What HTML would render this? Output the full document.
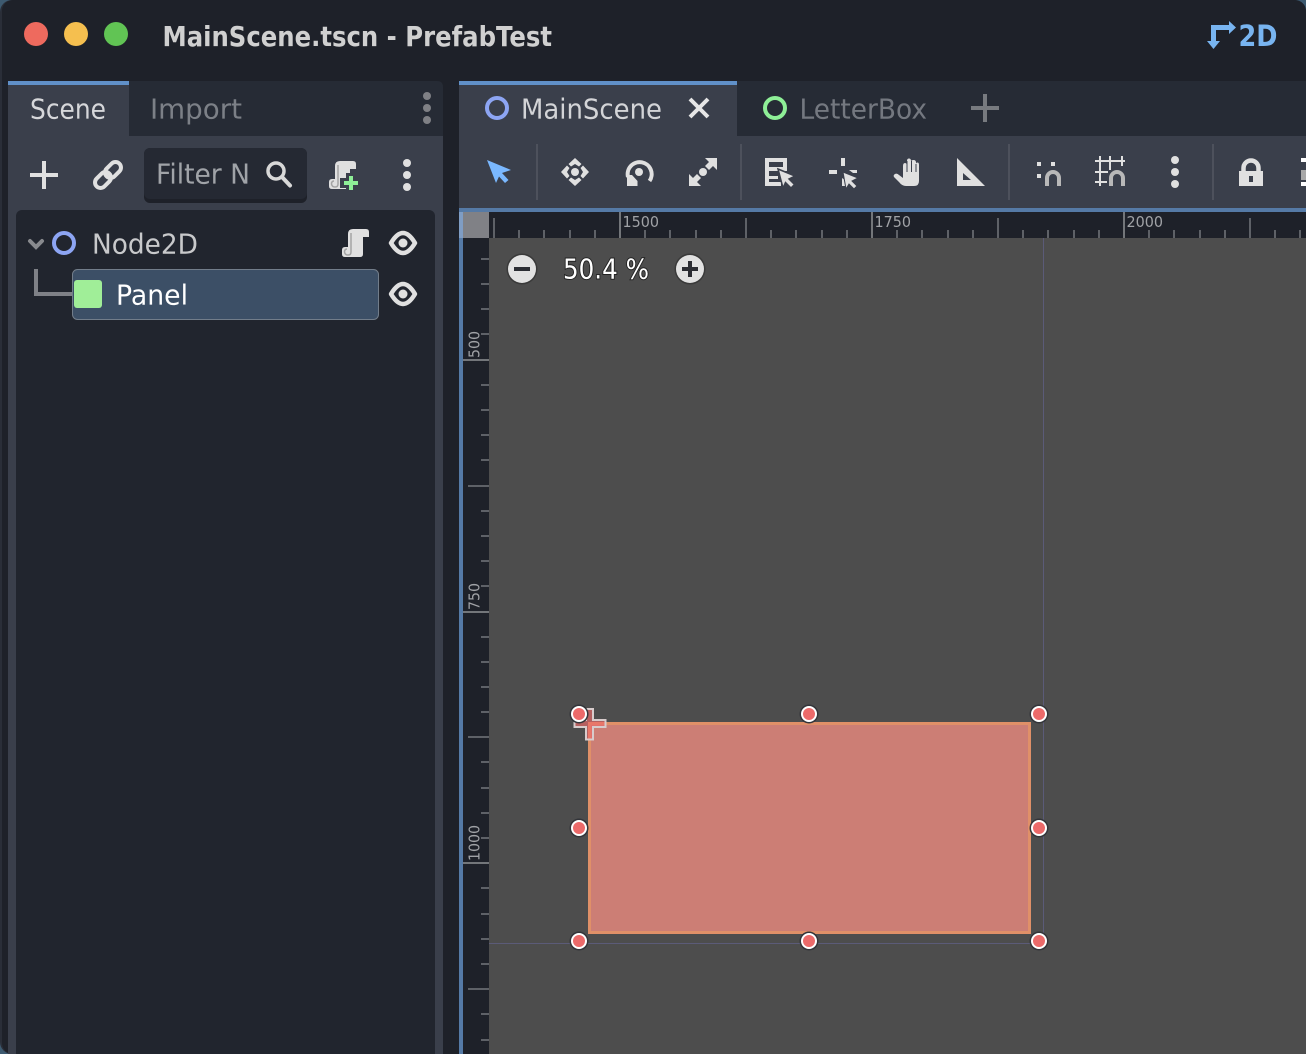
<!DOCTYPE html>
<html>
<head>
<meta charset="utf-8">
<style>
html,body{margin:0;padding:0;background:#1e2129;width:1306px;height:1054px;overflow:hidden}
svg{display:block}
text{font-family:"DejaVu Sans","Liberation Sans",sans-serif}
</style>
</head>
<body>
<svg width="1306" height="1054" viewBox="0 0 1306 1054" xmlns="http://www.w3.org/2000/svg">
<defs>
<g id="scroll">
<path d="M353 229H366Q369 229 369 232V237H363V254Q363 257 360 257H345Q342 257 342 254V250Q342 247 345 247H348V234Q348 229 353 229Z" fill="#e0e0e0"/>
<path d="M351 233V252Q351 255 348 255Q345 255 344.500 252Q344.500 249 347 249" fill="none" stroke="#a4a4a4" stroke-width="1.500"/>
</g>
<g id="eye"><path d="M-12 0Q0 -20 12 0Q0 20 -12 0Z" fill="none" stroke="#e0e0e0" stroke-width="4.500" stroke-linejoin="round"/><circle r="4.500" fill="#e0e0e0"/></g>
<g id="handle"><circle r="9.500" fill="#33353a"/><circle r="8" fill="#fff"/><circle r="6" fill="#ec6a6a"/></g>
</defs>

<!-- window -->
<rect width="1306" height="1054" fill="#3d5a70"/>
<rect x="0" y="0" width="1306" height="1054" rx="12" ry="12" fill="#2a2e38"/>
<rect x="2" y="0" width="1304" height="1054" rx="11" fill="#1e2129"/>

<!-- traffic lights -->
<circle cx="36" cy="34" r="12" fill="#ee6a5e"/>
<circle cx="76" cy="34" r="12" fill="#f5bf4f"/>
<circle cx="116" cy="34" r="12" fill="#61c454"/>

<text x="162.500" y="46" font-size="28" font-weight="700" fill="#d0d0d0" textLength="389.500" lengthAdjust="spacingAndGlyphs">MainScene.tscn - PrefabTest</text>

<!-- 2D -->
<g fill="#78b4f0">
<path d="M1211 25H1229V21L1236 27.500L1229 34V30H1216V41H1220L1213.500 49L1207 41H1211Z"/>
<text x="1238.500" y="46" font-size="29" font-weight="700" textLength="39" lengthAdjust="spacingAndGlyphs">2D</text>
</g>

<!-- left panel -->
<path d="M8 81H437Q443 81 443 87V1054H8Z" fill="#262b35"/>
<rect x="8" y="136" width="435" height="918" fill="#3a3f4b"/>
<rect x="8" y="81" width="121" height="55" fill="#3a3f4b"/>
<rect x="8" y="81" width="121" height="4" fill="#6090c8"/>
<text x="30" y="118.500" font-size="28" fill="#d6d7da" textLength="76" lengthAdjust="spacingAndGlyphs">Scene</text>
<text x="150" y="118.500" font-size="28" fill="#7c8087" textLength="92" lengthAdjust="spacingAndGlyphs">Import</text>
<g fill="#7f8085"><circle cx="427" cy="96" r="4"/><circle cx="427" cy="108" r="4"/><circle cx="427" cy="120" r="4"/></g>

<!-- scene toolbar -->
<path d="M30 173H42V161H46V173H58V177H46V189H42V177H30Z" fill="#e0e0e0"/>
<g fill="none" stroke="#e0e0e0" stroke-width="4">
<rect x="-5.500" y="-9" width="11" height="18" rx="5.500" transform="translate(113 170) rotate(45)"/>
<rect x="-5.500" y="-9" width="11" height="18" rx="5.500" transform="translate(103 180) rotate(45)"/>
</g>
<rect x="144" y="148" width="163" height="55" rx="6" fill="#1e2129"/>
<rect x="144" y="148" width="163" height="51" rx="6" fill="#252933"/>
<text x="156" y="183.500" font-size="28" fill="#a0a3a8" textLength="94" lengthAdjust="spacingAndGlyphs">Filter N</text>
<circle cx="276" cy="171" r="8" fill="none" stroke="#d8d8d8" stroke-width="3.500"/>
<path d="M282 177L290 185.500" stroke="#d8d8d8" stroke-width="4" stroke-linecap="round"/>
<use href="#scroll" x="-13" y="-68"/>
<path d="M346 173H356V178H362V188H356V193H346V188H340V178H346Z" fill="#3a3f4b"/>
<path d="M349 176H353V181H358V185H353V190H349V185H344V181H349Z" fill="#8eef97"/>
<g fill="#e0e0e0"><circle cx="407" cy="163" r="4"/><circle cx="407" cy="175" r="4"/><circle cx="407" cy="187" r="4"/></g>

<!-- tree -->
<rect x="16" y="210" width="419" height="860" rx="6" fill="#21252e"/>
<path d="M30 241L36 247L42 241" fill="none" stroke="#888a8e" stroke-width="4" stroke-linecap="round"/>
<circle cx="64" cy="243" r="10" fill="none" stroke="#8da5f3" stroke-width="4"/>
<text x="92" y="253.500" font-size="28" fill="#c8c9cb" textLength="106" lengthAdjust="spacingAndGlyphs">Node2D</text>
<use href="#scroll"/>
<use href="#eye" x="403" y="243"/>
<path d="M36 269V294H72" fill="none" stroke="#7f8187" stroke-width="4"/>
<rect x="72.500" y="269.500" width="306" height="50" rx="5" fill="#3c4f66" stroke="#727d8a"/>
<rect x="74" y="280" width="28" height="28" rx="3" fill="#a0ee98"/>
<text x="116" y="304.500" font-size="28" fill="#ffffff" textLength="72" lengthAdjust="spacingAndGlyphs">Panel</text>
<use href="#eye" x="403" y="294"/>

<!-- right panel tabs -->
<rect x="459" y="81" width="847" height="55" fill="#262b35"/>
<rect x="459" y="81" width="278" height="55" fill="#3a3f4b"/>
<rect x="459" y="81" width="278" height="4" fill="#6090c8"/>
<circle cx="497" cy="108" r="10" fill="none" stroke="#8da5f3" stroke-width="4"/>
<text x="521" y="118.500" font-size="28" fill="#d3d4d7" textLength="141" lengthAdjust="spacingAndGlyphs">MainScene</text>
<path d="M690 99L708 117M708 99L690 117" stroke="#e6e6e6" stroke-width="4"/>
<circle cx="775" cy="108" r="10" fill="none" stroke="#8eef97" stroke-width="4"/>
<text x="799.500" y="118.500" font-size="28" fill="#747880" textLength="127.500" lengthAdjust="spacingAndGlyphs">LetterBox</text>
<path d="M971 106H983V94H987V106H999V110H987V122H983V110H971Z" fill="#777a7f"/>

<!-- editor toolbar -->
<rect x="459" y="136" width="847" height="72" fill="#3a3f4b"/>
<g fill="#4d515c">
<rect x="536" y="144" width="2" height="56"/>
<rect x="740" y="144" width="2" height="56"/>
<rect x="1008" y="144" width="2" height="56"/>
<rect x="1212" y="144" width="2" height="56"/>
</g>
<polygon points="487,160 511,170 502,173 508.500,180 505,183 499,176.500 496,183" fill="#7ab8ff"/>
<g fill="#e0e0e0">
<!-- move -->
<circle cx="575" cy="172" r="4"/>
<path d="M575 158L581.500 164L579 166.500L575 164L571 166.500L568.500 164Z"/>
<path d="M575 186L581.500 180L579 177.500L575 180L571 177.500L568.500 180Z"/>
<path d="M561 172L567 165.500L569.500 168L567 172L569.500 176L567 178.500Z"/>
<path d="M589 172L583 165.500L580.500 168L583 172L580.500 176L583 178.500Z"/>
<!-- rotate -->
<circle cx="639" cy="172" r="4"/>
<path d="M628 177A12 12 0 1 1 649.500 181" fill="none" stroke="#e0e0e0" stroke-width="4"/>
<polygon points="627,175 627,186 637.500,186 637.500,181 632,175"/>
<!-- scale -->
<circle cx="703" cy="172" r="4"/>
<polygon points="705,158 717,158 717,170 713,166 709,170 705,166 709,162"/>
<polygon points="701,186 689,186 689,174 693,178 697,174 701,178 697,182"/>
<!-- list select -->
<path d="M765 158H787V171H769V176H778V179H769V182H781V186H765ZM769 162V167H783V162Z" fill-rule="evenodd"/>
<polygon points="778,169 795,176 789,179 794.500,184.500 791,188 785.500,182.500 783,188" stroke="#3a3f4b" stroke-width="1.500"/>
<!-- smart select -->
<rect x="829" y="170" width="8" height="4"/>
<rect x="841" y="158" width="4" height="8"/>
<polygon points="849,170 857,170 857,173 853,173"/>
<polygon points="842,178 845,180 845,186 842,186"/>
<polygon points="843,172 858,178 852,181 857,186 854,189 849,184 846,189" stroke="#3a3f4b" stroke-width="1"/>
<!-- hand -->
<path d="M903 166Q903 163 905 163Q907 163 907 166V161Q907 158.500 909 158.500Q911 158.500 911 161V162Q911 160 913.500 160Q916 160 916 162.500V164Q916 162.500 917.500 162.500Q919 162.500 919 165V181Q919 186 914 186H906Q902 186 899 182L894 177Q893 175 895 174Q897 173 899 175L903 178Z"/>
<path d="M907 161V172M911.500 161V172M916 164V172" stroke="#3a3f4b" stroke-width="1" fill="none"/>
<!-- ruler -->
<path d="M957 158L985 186H957ZM963 173V180H971Z" fill-rule="evenodd"/>
<!-- snap dots -->
<rect x="1037" y="162" width="4" height="4"/>
<rect x="1051" y="162" width="4" height="4"/>
<rect x="1037" y="174" width="4" height="4"/>
</g>
<path d="M1047 186V178A6 6 0 0 1 1059 178V186" fill="none" stroke="#b8b8b8" stroke-width="4"/>
<!-- grid snap -->
<path d="M1100 156V186M1110 156V170M1122 156V166M1095 161H1125M1095 172H1108M1095 182H1107" fill="none" stroke="#e0e0e0" stroke-width="2"/>
<path d="M1111 186V178A6 6 0 0 1 1123 178V186" fill="none" stroke="#b8b8b8" stroke-width="4"/>
<g fill="#e0e0e0"><circle cx="1175" cy="160" r="4"/><circle cx="1175" cy="172" r="4"/><circle cx="1175" cy="184" r="4"/></g>
<!-- lock -->
<path d="M1243.500 172V168A7.500 7.500 0 0 1 1258.500 168V172" fill="none" stroke="#e0e0e0" stroke-width="4.500"/>
<path d="M1239 171H1263V186H1239ZM1249 176V182H1253V176Z" fill="#e0e0e0" fill-rule="evenodd"/>
<rect x="1301" y="158" width="5" height="4" fill="#fff"/>
<rect x="1301" y="170" width="5" height="10" fill="#a8a8a8"/>
<rect x="1301" y="182" width="5" height="4" fill="#fff"/>

<!-- viewport + rulers -->
<rect x="459" y="208" width="847" height="846" fill="#1e2129"/>
<rect x="489" y="238" width="817" height="816" fill="#4d4d4d"/>
<rect x="463" y="212" width="26" height="26" fill="#808186"/>
<rect x="459" y="208" width="847" height="4" fill="#557aa6"/>
<rect x="459" y="208" width="4" height="846" fill="#557aa6"/>
<rect x="459" y="212" width="4" height="26" fill="#7f9dc4"/>
<path fill="none" stroke="#74777c" stroke-width="1.500" d="
M494 218V238M746 218V238M998 218V238M1250 218V238
M519 230V238M544 230V238M570 230V238M595 230V238M645 230V238M670 230V238M696 230V238M721 230V238
M771 230V238M796 230V238M822 230V238M847 230V238M897 230V238M922 230V238M948 230V238M973 230V238
M1023 230V238M1048 230V238M1074 230V238M1099 230V238M1149 230V238M1174 230V238M1200 230V238M1225 230V238M1275 230V238M1300 230V238
M468 486H489M468 737H489M468 989H489
M481 259H489M481 284H489M481 309H489M481 334H489M481 385H489M481 410H489M481 435H489M481 460H489
M481 511H489M481 536H489M481 561H489M481 586H489M481 637H489M481 662H489M481 687H489M481 712H489
M481 762H489M481 788H489M481 813H489M481 838H489M481 888H489M481 914H489M481 939H489M481 964H489M481 1014H489M481 1040H489"/>
<path fill="none" stroke="#8f9296" stroke-width="1.500" d="M620 212V238M872 212V238M1124 212V238M463 360H489M463 612H489M463 863H489"/>
<g font-size="15.500" fill="#a0a2a6">
<text x="622.500" y="227" textLength="36.500" lengthAdjust="spacingAndGlyphs">1500</text>
<text x="874.500" y="227" textLength="36.500" lengthAdjust="spacingAndGlyphs">1750</text>
<text x="1126.500" y="227" textLength="36.500" lengthAdjust="spacingAndGlyphs">2000</text>
<text transform="translate(479.500 358) rotate(-90)" textLength="27" lengthAdjust="spacingAndGlyphs">500</text>
<text transform="translate(479.500 610) rotate(-90)" textLength="27" lengthAdjust="spacingAndGlyphs">750</text>
<text transform="translate(479.500 861) rotate(-90)" textLength="36" lengthAdjust="spacingAndGlyphs">1000</text>
</g>

<!-- frame lines -->
<path d="M1043.500 238V943.500M489 943.500H1044" fill="none" stroke="#5b5b78" stroke-width="1"/>

<!-- zoom -->
<circle cx="522" cy="269" r="15.500" fill="#3a3a3a"/><circle cx="522" cy="269" r="14" fill="#e2e2e2"/>
<rect x="514" y="267" width="16" height="4" fill="#2b2d33"/>
<circle cx="690" cy="269" r="15.500" fill="#3a3a3a"/><circle cx="690" cy="269" r="14" fill="#e2e2e2"/>
<path d="M682 267H688V261H692V267H698V271H692V277H688V271H682Z" fill="#2b2d33"/>
<text x="563" y="278.500" font-size="28" fill="#fff" stroke="#222" stroke-width="2" paint-order="stroke" textLength="86" lengthAdjust="spacingAndGlyphs">50.4 %</text>

<!-- panel -->
<rect x="589.500" y="723.500" width="440" height="209" fill="#cc7e75" stroke="#e09068" stroke-width="3"/>

<!-- anchor cross -->
<path d="M586 709H593V720H605.500V727H593V739.500H586V727H574.500V720H586Z" fill="#ec6a6a" fill-opacity=".65" stroke="#d8cccc" stroke-width="2"/>

<!-- handles -->
<use href="#handle" x="579" y="714"/>
<use href="#handle" x="809" y="714"/>
<use href="#handle" x="1039" y="714"/>
<use href="#handle" x="579" y="828"/>
<use href="#handle" x="1039" y="828"/>
<use href="#handle" x="579" y="941"/>
<use href="#handle" x="809" y="941"/>
<use href="#handle" x="1039" y="941"/>
</svg>
</body>
</html>
